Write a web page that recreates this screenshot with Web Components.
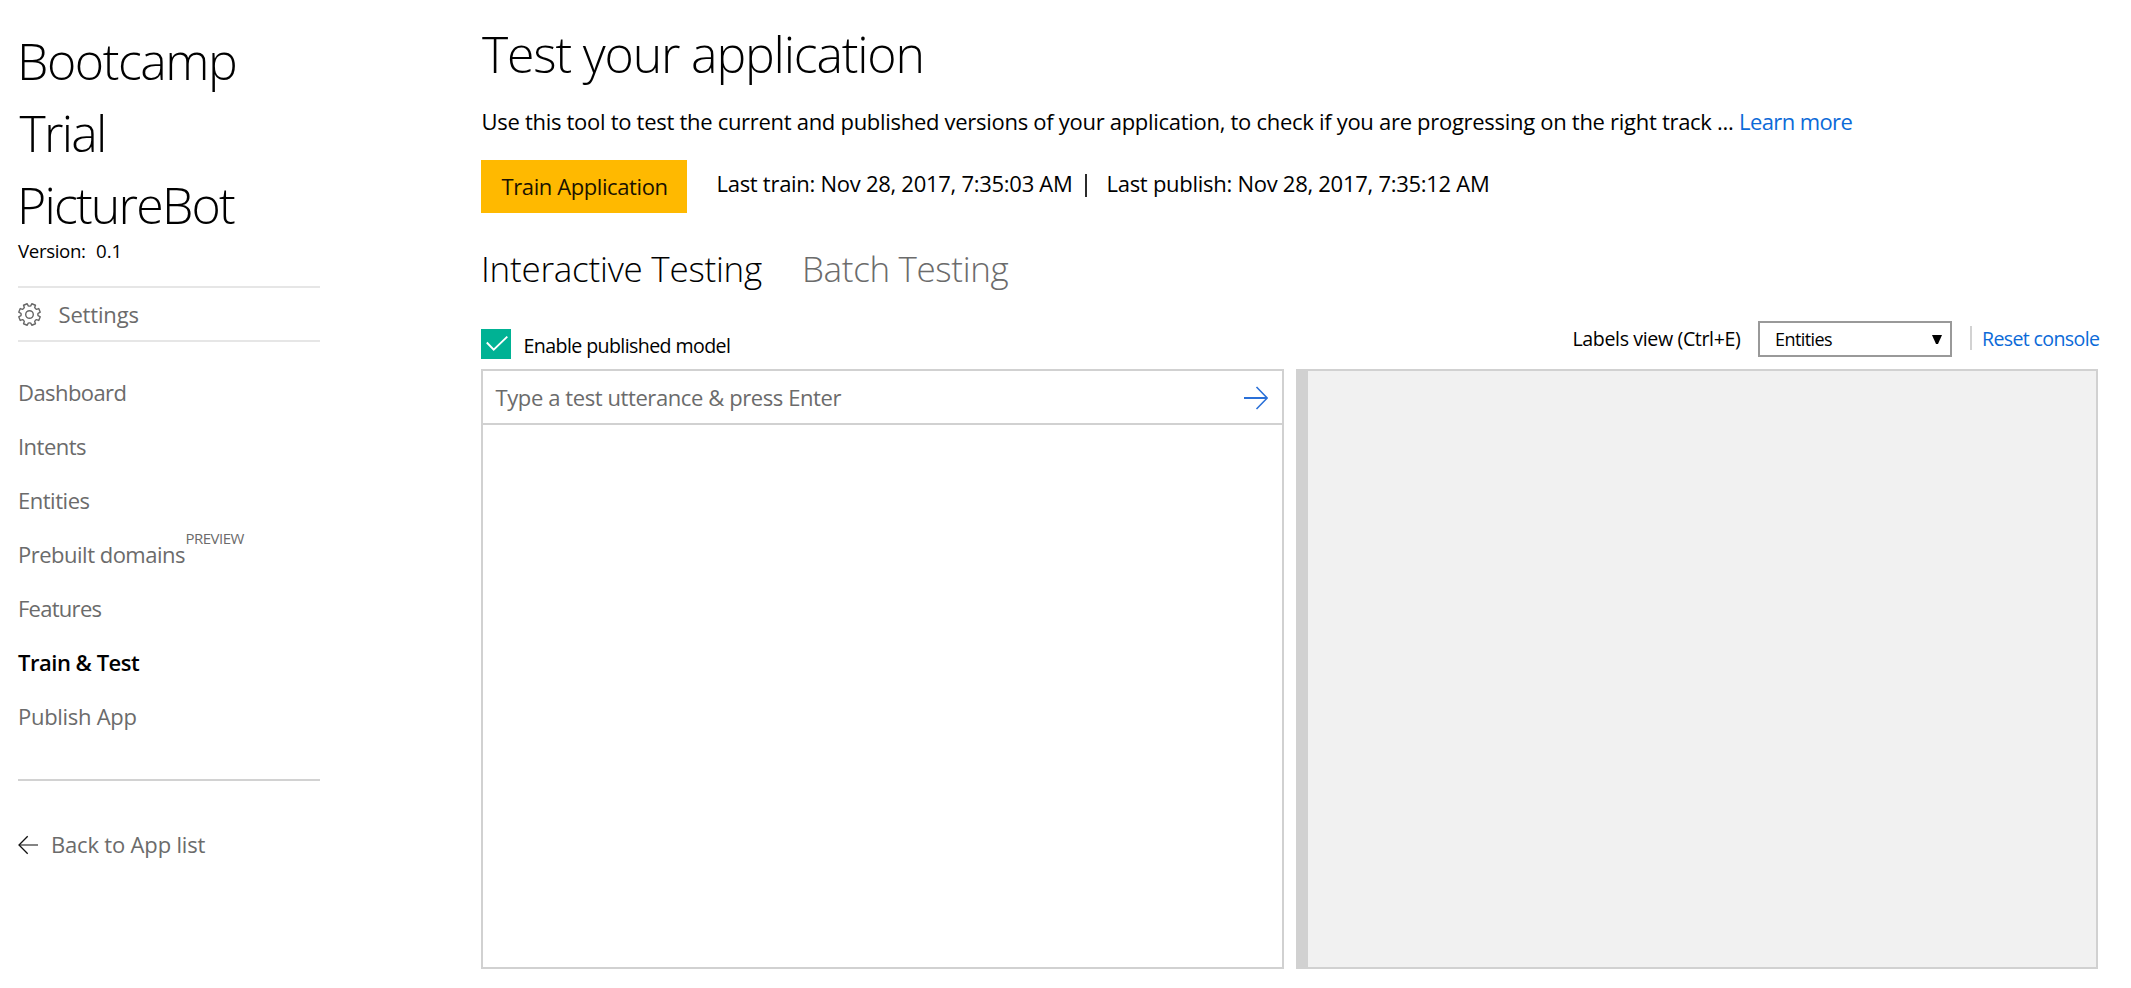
<!DOCTYPE html>
<html lang="en">
<head>
<meta charset="utf-8">
<title>Test your application</title>
<style>
  html, body { margin: 0; background: #fff; }
  body { font-family: "Open Sans", "Noto Sans", sans-serif; color: #000; width: 2131px; height: 988px; overflow: hidden; }
</style>
</head>
<body>
<luis-app></luis-app>
<script>
const ctx = document.createElement('canvas').getContext('2d');
const FAMILY = '"Open Sans", "Noto Sans", sans-serif';

class Base extends HTMLElement {
  connectedCallback() {
    if (this.shadowRoot) return;
    this.attachShadow({ mode: 'open' }).innerHTML = this.render();
  }
}

/* A single line of text whose glyphs span exactly `w` pixels: size, lh, weight are attributes. */
class FitText extends Base {
  render() {
    const size = +(this.getAttribute('size') || 22);
    const weight = this.getAttribute('weight') || 400;
    const lh = this.getAttribute('lh') || 30;
    const w = +this.getAttribute('w');
    const text = this.textContent;
    ctx.font = `${weight} ${size}px ${FAMILY}`;
    const m = ctx.measureText(text);
    const ink = m.actualBoundingBoxLeft + m.actualBoundingBoxRight;
    const ls = (w - ink) / (text.length - 1);
    return `<style>
      :host { display: block; flex: none; width: ${w}px; height: ${lh}px; }
      span { display: block; white-space: pre; margin-left: ${m.actualBoundingBoxLeft}px;
        font: ${weight} ${size}px/${lh}px ${FAMILY}; letter-spacing: ${ls.toFixed(4)}px; }
    </style><span><slot></slot></span>`;
  }
}

class GearIcon extends Base {
  render() {
    const pts = [];
    const n = 8, R = 11, r = 8.7;
    let d = '';
    for (let i = 0; i < n; i++) {
      const c = i * 2 * Math.PI / n + Math.PI / 8;
      [[r, -.25], [R, -.18], [R, .18], [r, .25]].forEach(([rad, o]) => {
        pts.push([(11.5 + rad * Math.cos(c + o)).toFixed(2), (11.5 + rad * Math.sin(c + o)).toFixed(2)]);
      });
    }
    pts.forEach((p, i) => {
      if (i === 0) d += `M${p}`;
      else if (i % 4 === 0) d += `A3.2 3.2 0 0 0 ${p}`;
      else d += `L${p}`;
    });
    d += `A3.2 3.2 0 0 0 ${pts[0]}Z`;
    return `<style>:host{display:block;flex:none;width:24px;height:24px}svg{display:block}</style>
      <svg width="24" height="24" fill="none" stroke="#666" stroke-width="1.4" stroke-linejoin="round"><path d="${d}"/><circle cx="11.5" cy="11.5" r="3.8"/></svg>`;
  }
}

class ArrowIcon extends Base {
  render() {
    const back = this.getAttribute('dir') === 'back';
    return `<style>:host{display:block;flex:none}svg{display:block}</style>` + (back
      ? `<svg width="20" height="20" fill="none"><path d="M1 10H20" stroke="#777" stroke-width="1.8"/><path d="M9.7 1.2L1 10L9.7 18.8" stroke="#111" stroke-width="1.3"/></svg>`
      : `<svg width="24" height="24" fill="none" stroke="#2a70d8"><path d="M0 12H23" stroke-width="2"/><path d="M12.5 1L23.2 12L12.5 23" stroke-width="1.6"/></svg>`);
  }
}

class NavItem extends Base {
  render() {
    const active = this.hasAttribute('active');
    return `<style>
      :host { display: flex; height: 54px; padding-left: ${active ? 0 : 2}px; color: ${active ? '#000' : '#6b6b6b'}; }
      ::slotted([slot=badge]) { margin: 0 0 0 1.5px; }
    </style><slot></slot><slot name="badge"></slot>`;
  }
}

class SideBar extends Base {
  render() {
    return `<style>
      :host { display: flex; flex-direction: column; flex: none; width: 302px; padding: 25px 161px 0 18px; }
      .name { padding-left: 4px; }
      .name fit-text:nth-child(2) { margin-left: -2.5px; }
      .version { display: flex; gap: 11px; }
      .settings { display: flex; align-items: center; gap: 17.5px; height: 52px; margin-top: 25px; color: #6b6b6b;
        border-top: 2px solid #e6e6e6; border-bottom: 2px solid #e6e6e6; }
      nav { margin-top: 23px; }
      .rule { height: 2px; background: #d2d2d2; margin-top: 36px; }
      .back { display: flex; align-items: center; gap: 15px; margin-top: 48px; color: #6b6b6b; }
      gear-icon { margin-top: 1px; }
      arrow-icon { margin-top: 2px; }
    </style>
    <div class="name">
      <fit-text size="50" weight="300" lh="72" w="213">Bootcamp</fit-text>
      <fit-text size="50" weight="300" lh="72" w="83.5">Trial</fit-text>
      <fit-text size="50" weight="300" lh="72" w="213">PictureBot</fit-text>
    </div>
    <div class="version"><fit-text size="18.7" lh="20" w="67">Version:</fit-text><fit-text size="18.7" lh="20" w="22.5">0.1</fit-text></div>
    <div class="settings"><gear-icon></gear-icon><fit-text lh="52" w="79">Settings</fit-text></div>
    <nav>
      <nav-item><fit-text lh="54" w="105.5">Dashboard</fit-text></nav-item>
      <nav-item><fit-text lh="54" w="66">Intents</fit-text></nav-item>
      <nav-item><fit-text lh="54" w="69.5">Entities</fit-text></nav-item>
      <nav-item><fit-text lh="54" w="165">Prebuilt domains</fit-text><fit-text slot="badge" size="15" lh="22" w="58">PREVIEW</fit-text></nav-item>
      <nav-item><fit-text lh="54" w="81.5">Features</fit-text></nav-item>
      <nav-item active><fit-text weight="600" lh="54" w="122">Train &amp; Test</fit-text></nav-item>
      <nav-item><fit-text lh="54" w="116.5">Publish App</fit-text></nav-item>
    </nav>
    <div class="rule"></div>
    <div class="back"><arrow-icon dir="back"></arrow-icon><fit-text w="152.5">Back to App list</fit-text></div>`;
  }
}

class TrainBar extends Base {
  render() {
    return `<style>
      :host { display: flex; height: 53px; margin-top: 24px; }
      button { all: unset; display: block; box-sizing: border-box; width: 206px; height: 53px; padding-left: 20.5px; background: #ffb900; color: #1a1200; }
      .train { margin-left: 31.5px; }
      .bar { width: 1.5px; height: 23px; margin: 14px 22px 0 14px; background: #2b2b2b; }
    </style>
    <button><fit-text lh="53" w="165">Train Application</fit-text></button>
    <fit-text class="train" lh="47" w="352.5">Last train: Nov 28, 2017, 7:35:03 AM</fit-text>
    <div class="bar"></div>
    <fit-text lh="47" w="379.5">Last publish: Nov 28, 2017, 7:35:12 AM</fit-text>`;
  }
}

class CheckBox extends Base {
  render() {
    return `<style>
      :host { display: flex; gap: 13.5px; margin-top: 8px; }
      svg { display: block; background: #00b294; }
    </style>
    <svg width="30" height="30" fill="none" stroke="#fff" stroke-width="1.9"><path d="M5.8 13.5L12.7 20.7L26.3 7.6"/></svg>
    <slot></slot>`;
  }
}

class SelectBox extends Base {
  render() {
    return `<style>
      :host { display: flex; justify-content: space-between; box-sizing: border-box; width: 194px; height: 36px; border: 2px solid #999; padding: 0 8px 0 16px; }
      svg { display: block; margin-top: 12px; }
    </style><slot></slot><svg width="10" height="10"><path d="M0 0H10L6 9H4Z"/></svg>`;
  }
}

class ToolRow extends Base {
  render() {
    return `<style>
      :host { display: flex; align-items: flex-start; width: 1618px; height: 48px; margin-top: 27px; }
      .right { display: flex; margin-left: auto; }
      select-box { margin-left: 18px; }
      .sep { width: 2px; height: 24px; margin: 5px 11px 0 18px; background: #d2d2d2; }
      .link { color: #0b6ad8; }
    </style>
    <check-box><fit-text size="19.6" lh="34" w="205.5">Enable published model</fit-text></check-box>
    <div class="right">
      <fit-text size="19.6" lh="36" w="166.5">Labels view (Ctrl+E)</fit-text>
      <select-box><fit-text size="18" lh="32" w="56">Entities</fit-text></select-box>
      <div class="sep"></div>
      <fit-text class="link" size="19.6" lh="36" w="116">Reset console</fit-text>
    </div>`;
  }
}

class TestPanels extends Base {
  render() {
    return `<style>
      :host { display: flex; gap: 12px; width: 1617px; height: 600px; }
      .left { box-sizing: border-box; width: 803px; border: 2px solid #d1d1d1; }
      .input { display: flex; justify-content: space-between; align-items: center; height: 52px; padding: 0 14px 0 12.5px; border-bottom: 2px solid #d1d1d1; color: #6b6b6b; }
      .right { box-sizing: border-box; flex: 1; border: 2px solid #d1d1d1; border-left-width: 12px; background: #f1f1f1; }
      arrow-icon { margin-top: 2px; }
    </style>
    <div class="left"><div class="input"><fit-text lh="53" w="346">Type a test utterance &amp; press Enter</fit-text><arrow-icon></arrow-icon></div></div>
    <div class="right"></div>`;
  }
}

class MainView extends Base {
  render() {
    return `<style>
      :host { display: flex; flex-direction: column; flex: 1; padding-top: 24px; }
      .title { margin-left: 1px; }
      .intro { display: flex; gap: 8px; margin: 22px 0 0 1.5px; }
      .link { color: #0b6ad8; }
      .tabs { display: flex; gap: 43px; margin: 31px 0 0 3px; }
      .off { color: #6b6b6b; }
    </style>
    <fit-text class="title" size="50" weight="300" lh="60" w="439.5">Test your application</fit-text>
    <div class="intro">
      <fit-text w="1250.5">Use this tool to test the current and published versions of your application, to check if you are progressing on the right track ...</fit-text>
      <fit-text class="link" w="111.5">Learn more</fit-text>
    </div>
    <train-bar></train-bar>
    <div class="tabs">
      <fit-text size="35" weight="340" lh="50" w="278">Interactive Testing</fit-text>
      <fit-text class="off" size="35" weight="340" lh="50" w="203.5">Batch Testing</fit-text>
    </div>
    <tool-row></tool-row>
    <test-panels></test-panels>`;
  }
}

class LuisApp extends Base {
  render() {
    return `<style>:host { display: flex; width: 2131px; height: 988px; }</style><side-bar></side-bar><main-view></main-view>`;
  }
}

Object.entries({
  'fit-text': FitText, 'gear-icon': GearIcon, 'arrow-icon': ArrowIcon, 'nav-item': NavItem, 'side-bar': SideBar,
  'train-bar': TrainBar, 'check-box': CheckBox, 'select-box': SelectBox, 'tool-row': ToolRow,
  'test-panels': TestPanels, 'main-view': MainView, 'luis-app': LuisApp
}).forEach(([n, c]) => customElements.define(n, c));
</script>
</body>
</html>
